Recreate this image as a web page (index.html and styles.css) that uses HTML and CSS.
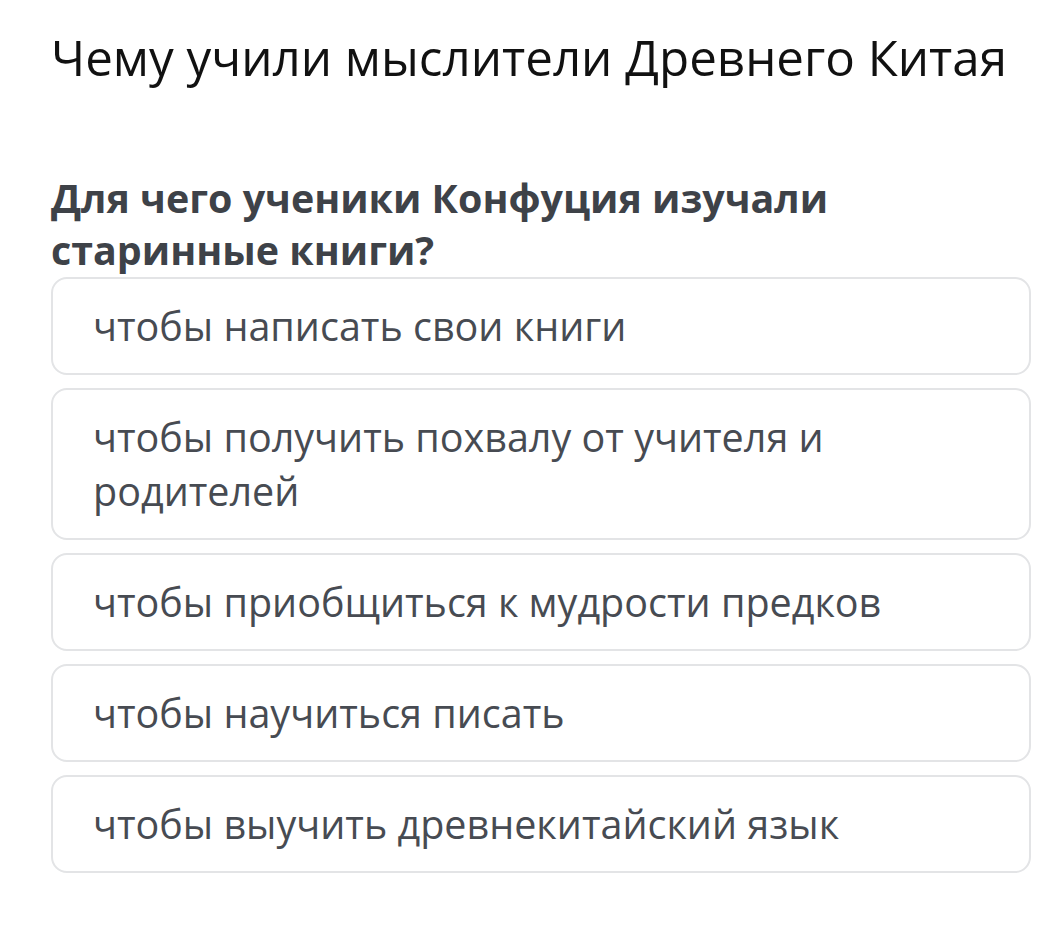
FILE: index.html
```html
<html>
<head>
<link rel="stylesheet" href="styles.css">
</head>
<body>
<div class="page">
  <h1 class="title">Чему учили мыслители Древнего Китая</h1>

  <div class="question">Для чего ученики Конфуция изучали старинные книги?</div>

  <div class="answers">
    <div class="answer">чтобы написать свои книги</div>
    <div class="answer">чтобы получить похвалу от учителя и родителей</div>
    <div class="answer">чтобы приобщиться к мудрости предков</div>
    <div class="answer">чтобы научиться писать</div>
    <div class="answer">чтобы выучить древнекитайский язык</div>
  </div>
</div>
</body>
</html>
```

FILE: styles.css
```css
body{
  margin: 0;
  background: #ffffff;
  font-family: 'Open Sans', 'Noto Sans', sans-serif;
}

.page{
  padding: 21px 8px 40px 51px;
}

.title{
  margin: 0;
  font-size: 49.3px;
  font-weight: 400;
  line-height: 72px;
  color: #111111;
}

.question{
  margin: 79px 0 1px;
  width: 860px;
  font-size: 39.4px;
  font-weight: 700;
  line-height: 52px;
  color: #3e4248;
}

.answers{
  display: flex;
  flex-direction: column;
  gap: 13px;
}

.answer{
  padding: 20px 40px;
  border: 2px solid #e3e4e6;
  border-radius: 16px;
  font-size: 39.5px;
  line-height: 54px;
  color: #474b52;
}
```
